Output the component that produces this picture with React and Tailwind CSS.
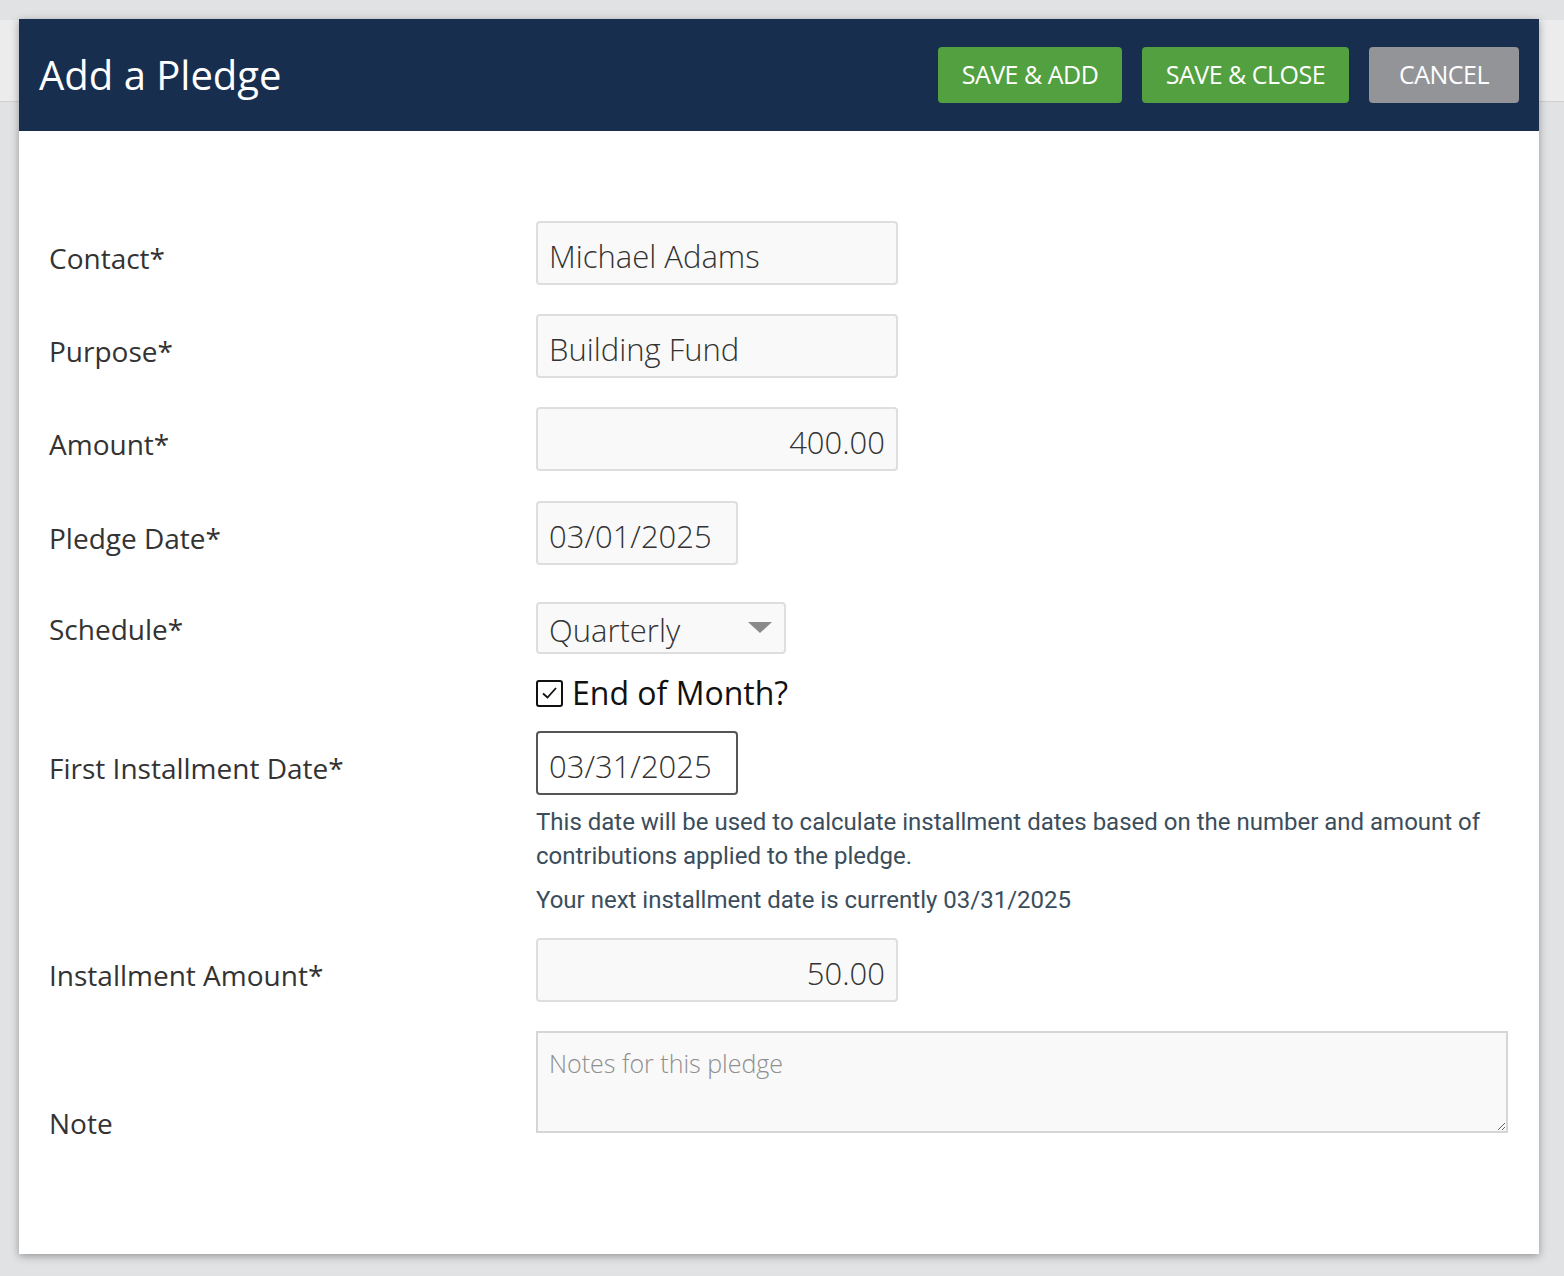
import { useState } from 'react'

const OPEN = { fontFamily: '"Open Sans", "Liberation Sans", sans-serif' }
const ROBOTO = { fontFamily: 'Roboto, "Liberation Sans", sans-serif' }

function Row({ label, children, align = 'items-center', className = '', labelClass = 'pt-[10px]' }) {
  return (
    <div className={`flex ${align} ${className}`}>
      <div className={`w-[487px] shrink-0 text-[28px] text-[#333] leading-[36px] ${labelClass}`}>{label}</div>
      <div className="flex-1">{children}</div>
    </div>
  )
}

function Field({ value, width = 'w-[362px]', right = false, dark = false }) {
  return (
    <div
      className={`${width} h-[64px] rounded-[4px] border-2 ${dark ? 'border-[#555] bg-white' : 'border-[#dedede] bg-[#f9f9f9]'} px-[11px] pt-[6px] flex items-center ${right ? 'justify-end' : ''} text-[31px] font-light text-[#333]`}
    >
      {value}
    </div>
  )
}

export default function App() {
  const [endOfMonth, setEndOfMonth] = useState(true)

  return (
    <div className="min-h-[1276px] bg-[#e1e2e4] relative overflow-hidden" style={OPEN}>
      {/* page strip behind the modal */}
      <div className="absolute left-0 right-0 top-[20px] h-[82px] bg-[#ececec] border-b border-[#d0d0d0]" />

      <div className="relative pt-[19px] pl-[19px] pr-[25px] pb-[22px]">
        <div className="bg-white shadow-[0_2px_8px_rgba(0,0,0,0.35)]">
          {/* Header */}
          <div className="bg-[#172e4f] h-[112px] flex items-center justify-between pl-[20px] pr-[20px]">
            <h1 className="text-white text-[40px] leading-none">Add a Pledge</h1>
            <div className="flex gap-[20px]">
              <button className="h-[56px] w-[184px] rounded-[4px] bg-[#52a03f] text-white text-[25px] tracking-[-0.5px]">
                SAVE &amp; ADD
              </button>
              <button className="h-[56px] w-[207px] rounded-[4px] bg-[#52a03f] text-white text-[25px] tracking-[-0.5px]">
                SAVE &amp; CLOSE
              </button>
              <button className="h-[56px] w-[150px] rounded-[4px] bg-[#939498] text-white text-[25px] tracking-[-0.5px]">
                CANCEL
              </button>
            </div>
          </div>

          {/* Body */}
          <div className="pl-[30px] pr-[30px] pt-[90px] pb-[121px]">
            <Row label="Contact*" className="mb-[29px]">
              <Field value="Michael Adams" />
            </Row>
            <Row label="Purpose*" className="mb-[29px]">
              <Field value="Building Fund" />
            </Row>
            <Row label="Amount*" className="mb-[30px]">
              <Field value="400.00" right />
            </Row>
            <Row label="Pledge Date*" className="mb-[37px]">
              <Field value="03/01/2025" width="w-[202px]" />
            </Row>
            <Row label="Schedule*" className="mb-[21px]" labelClass="pt-[2px]">
              <div className="w-[250px] h-[52px] rounded-[4px] border-2 border-[#dedede] bg-[#f9f9f9] pl-[11px] pr-[12px] pt-[4px] flex items-center justify-between text-[31px] font-light text-[#333]">
                <span>Quarterly</span>
                <svg width="24" height="12" viewBox="0 0 24 12" className="-mt-[4px]">
                  <path d="M0 0 L24 0 L12 11 Z" fill="#8a8a8a" />
                </svg>
              </div>
            </Row>
            <div className="flex mb-[20px]">
              <div className="w-[487px] shrink-0" />
              <label className="flex items-center gap-[9px] cursor-pointer">
                <span
                  onClick={() => setEndOfMonth(!endOfMonth)}
                  className="w-[27px] h-[27px] border-2 border-[#111] rounded-[3px] flex items-center justify-center bg-white"
                >
                  {endOfMonth && (
                    <svg width="17" height="14" viewBox="0 0 17 14">
                      <path d="M2 7.5 L6.5 11.5 L15 2" fill="none" stroke="#111" strokeWidth="1.8" />
                    </svg>
                  )}
                </span>
                <span className="text-[32px] text-[#111] leading-[36px]">End of Month?</span>
              </label>
            </div>
            <Row label="First Installment Date*">
              <Field value="03/31/2025" width="w-[202px]" dark />
            </Row>
            <div className="flex">
              <div className="w-[487px] shrink-0" />
              <div className="flex-1 text-[#3b4d5b] text-[24px]" style={ROBOTO}>
                <p className="mt-[10px] leading-[34px]">
                  This date will be used to calculate installment dates based on the number and amount of contributions applied to the pledge.
                </p>
                <p className="mt-[10px] leading-[34px]">Your next installment date is currently 03/31/2025</p>
              </div>
            </div>
            <Row label="Installment Amount*" className="mt-[21px] mb-[29px]">
              <Field value="50.00" right />
            </Row>
            <Row label="Note" align="items-end" labelClass="-mb-[8px]">
              <textarea
                placeholder="Notes for this pledge"
                className="block w-[972px] h-[102px] border-2 border-[#d6d6d6] bg-[#f9f9f9] px-[11px] pt-[12px] text-[25px] font-light text-[#333] placeholder:text-[#8f8f8f] outline-none"
                style={OPEN}
              />
            </Row>
          </div>
        </div>
      </div>
    </div>
  )
}
